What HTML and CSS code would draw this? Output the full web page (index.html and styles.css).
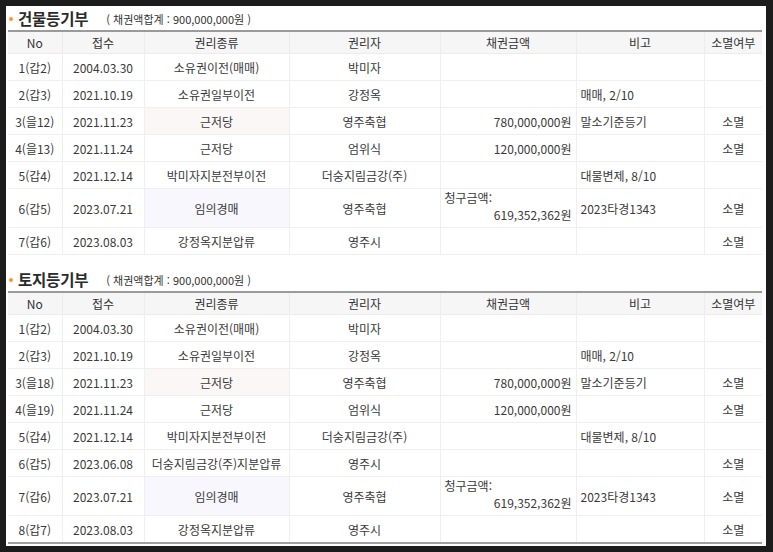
FILE: index.html
```html
<!DOCTYPE html>
<html lang="ko">
<head>
<meta charset="utf-8">
<link rel="stylesheet" href="styles.css">
</head>
<body>
<div class="frame">
  <div class="section">
    <div class="title"><span class="dot"></span><span class="title-main">건물등기부</span><span class="title-sub">( 채권액합계 : 900,000,000원 )</span></div>
    <table class="reg">
      <colgroup>
        <col class="c1"><col class="c2"><col class="c3"><col class="c4"><col class="c5"><col class="c6"><col class="c7">
      </colgroup>
      <thead>
        <tr><th>No</th><th>접수</th><th>권리종류</th><th>권리자</th><th>채권금액</th><th>비고</th><th>소멸여부</th></tr>
      </thead>
      <tbody>
        <tr><td>1(갑2)</td><td>2004.03.30</td><td>소유권이전(매매)</td><td>박미자</td><td class="amt"></td><td class="note"></td><td></td></tr>
        <tr><td>2(갑3)</td><td>2021.10.19</td><td>소유권일부이전</td><td>강정옥</td><td class="amt"></td><td class="note">매매, 2/10</td><td></td></tr>
        <tr><td>3(을12)</td><td>2021.11.23</td><td class="pink">근저당</td><td>영주축협</td><td class="amt">780,000,000원</td><td class="note">말소기준등기</td><td>소멸</td></tr>
        <tr><td>4(을13)</td><td>2021.11.24</td><td>근저당</td><td>엄위식</td><td class="amt">120,000,000원</td><td class="note"></td><td>소멸</td></tr>
        <tr><td>5(갑4)</td><td>2021.12.14</td><td>박미자지분전부이전</td><td>더숭지림금강(주)</td><td class="amt"></td><td class="note">대물변제, 8/10</td><td></td></tr>
        <tr class="tall"><td>6(갑5)</td><td>2023.07.21</td><td class="lav">임의경매</td><td>영주축협</td><td class="amt claim"><div class="claim-label">청구금액:</div><div class="claim-val">619,352,362원</div></td><td class="note">2023타경1343</td><td>소멸</td></tr>
        <tr><td>7(갑6)</td><td>2023.08.03</td><td>강정옥지분압류</td><td>영주시</td><td class="amt"></td><td class="note"></td><td>소멸</td></tr>
      </tbody>
    </table>
  </div>
  <div class="section second">
    <div class="title"><span class="dot"></span><span class="title-main">토지등기부</span><span class="title-sub">( 채권액합계 : 900,000,000원 )</span></div>
    <table class="reg last">
      <colgroup>
        <col class="c1"><col class="c2"><col class="c3"><col class="c4"><col class="c5"><col class="c6"><col class="c7">
      </colgroup>
      <thead>
        <tr><th>No</th><th>접수</th><th>권리종류</th><th>권리자</th><th>채권금액</th><th>비고</th><th>소멸여부</th></tr>
      </thead>
      <tbody>
        <tr><td>1(갑2)</td><td>2004.03.30</td><td>소유권이전(매매)</td><td>박미자</td><td class="amt"></td><td class="note"></td><td></td></tr>
        <tr><td>2(갑3)</td><td>2021.10.19</td><td>소유권일부이전</td><td>강정옥</td><td class="amt"></td><td class="note">매매, 2/10</td><td></td></tr>
        <tr><td>3(을18)</td><td>2021.11.23</td><td class="pink">근저당</td><td>영주축협</td><td class="amt">780,000,000원</td><td class="note">말소기준등기</td><td>소멸</td></tr>
        <tr><td>4(을19)</td><td>2021.11.24</td><td>근저당</td><td>엄위식</td><td class="amt">120,000,000원</td><td class="note"></td><td>소멸</td></tr>
        <tr><td>5(갑4)</td><td>2021.12.14</td><td>박미자지분전부이전</td><td>더숭지림금강(주)</td><td class="amt"></td><td class="note">대물변제, 8/10</td><td></td></tr>
        <tr><td>6(갑5)</td><td>2023.06.08</td><td>더숭지림금강(주)지분압류</td><td>영주시</td><td class="amt"></td><td class="note"></td><td>소멸</td></tr>
        <tr class="tall"><td>7(갑6)</td><td>2023.07.21</td><td class="lav">임의경매</td><td>영주축협</td><td class="amt claim"><div class="claim-label">청구금액:</div><div class="claim-val">619,352,362원</div></td><td class="note">2023타경1343</td><td>소멸</td></tr>
        <tr><td>8(갑7)</td><td>2023.08.03</td><td>강정옥지분압류</td><td>영주시</td><td class="amt"></td><td class="note"></td><td>소멸</td></tr>
      </tbody>
    </table>
  </div>
</div>
</body>
</html>
```

FILE: styles.css
```css
html, body {
  margin: 0;
  padding: 0;
  background: #1c1c1c;
}
body {
  padding: 6px 0 0 6px;
  font-family: "Noto Sans CJK KR", "Noto Sans", sans-serif;
  color: #333;
}
.frame {
  width: 760px;
  height: 540px;
  background: #fff;
  overflow: hidden;
  box-sizing: border-box;
  padding-left: 2px;
}
.section.second {
  margin-top: 12px;
}
.title {
  height: 24px;
  display: flex;
  align-items: center;
}
.dot {
  width: 4px;
  height: 4px;
  border-radius: 50%;
  background: #f29a2e;
  margin: 2px 5px 0 1px;
}
.title-main {
  font-size: 15.5px;
  font-weight: 700;
  color: #2b2b2b;
  letter-spacing: -0.2px;
}
.title-sub {
  font-size: 11px;
  color: #333;
  margin-left: 18px;
  padding-top: 2px;
}
table.reg {
  width: 754px;
  border-collapse: collapse;
  table-layout: fixed;
  font-size: 12px;
}
.c1 { width: 54px; }
.c2 { width: 82px; }
.c3 { width: 145px; }
.c4 { width: 151px; }
.c5 { width: 136px; }
.c6 { width: 128px; }
.c7 { width: 58px; }
.reg th {
  height: 21px;
  padding: 0;
  font-weight: 400;
  color: #333;
  background: #f6f6f6;
  border-top: 2px solid #9a9a9a;
  border-left: 1px solid #ececec;
  border-bottom: 1px solid #ececec;
  text-align: center;
}
.reg th:first-child { border-left: none; }
.reg td {
  height: 26px;
  padding: 0;
  border-left: 1px solid #efefef;
  border-bottom: 1px solid #efefef;
  text-align: center;
  color: #3a3a3a;
  white-space: nowrap;
}
.reg td:first-child { border-left: none; }
.reg tr.tall td { height: 37px; }
.reg td.amt {
  text-align: right;
  padding-right: 4px;
}
.reg td.note {
  text-align: left;
  padding-left: 4px;
}
.reg td.pink { background: #fcf7f7; }
.reg td.lav { background: #f7f7fd; }
.reg td.claim {
  vertical-align: top;
  padding-top: 1px;
}
.claim-label {
  text-align: left;
  padding-left: 4px;
  line-height: 16px;
}
.claim-val {
  line-height: 18px;
}
.reg.last tbody tr:last-child td {
  border-bottom: 2px solid #a0a0a0;
}
```
